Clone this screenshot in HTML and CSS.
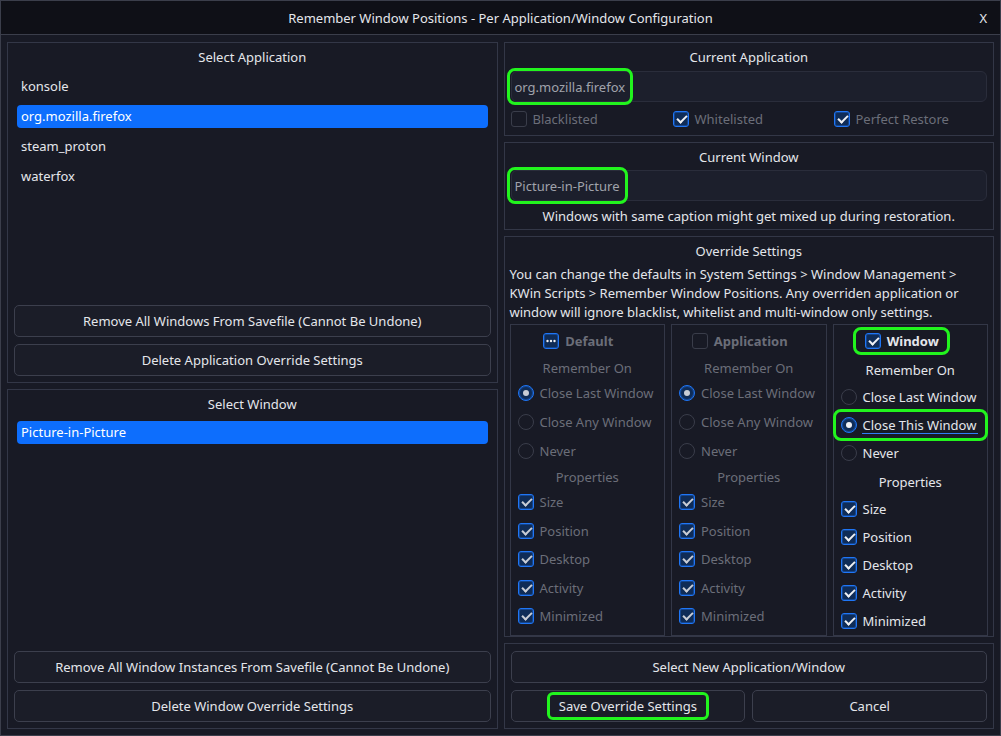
FILE: index.html
```html
<!DOCTYPE html>
<html lang="en">
<head>
<meta charset="utf-8">
<title>Remember Window Positions</title>
<link rel="stylesheet" href="styles.css">
</head>
<body>
<div class="window">
  <header class="titlebar">
    <span class="title">Remember Window Positions - Per Application/Window Configuration</span>
    <span class="close">X</span>
  </header>
  <main class="content">
    <section class="column">
      <div class="group grow">
        <div class="gtitle">Select Application</div>
        <ul class="list applist">
          <li>konsole</li>
          <li class="sel">org.mozilla.firefox</li>
          <li>steam_proton</li>
          <li>waterfox</li>
        </ul>
        <div class="btns">
          <button class="btn">Remove All Windows From Savefile (Cannot Be Undone)</button>
          <button class="btn">Delete Application Override Settings</button>
        </div>
      </div>
      <div class="group grow">
        <div class="gtitle">Select Window</div>
        <ul class="list">
          <li class="sel">Picture-in-Picture</li>
        </ul>
        <div class="btns">
          <button class="btn">Remove All Window Instances From Savefile (Cannot Be Undone)</button>
          <button class="btn">Delete Window Override Settings</button>
        </div>
      </div>
    </section>

    <section class="column">
      <div class="group groupa">
        <div class="gtitle">Current Application</div>
        <div class="field"><span class="hl fieldhl">org.mozilla.firefox</span></div>
        <div class="checks">
          <label class="opt dimtext"><span class="cb"></span>Blacklisted</label>
          <label class="opt dimtext"><span class="cb on"></span>Whitelisted</label>
          <label class="opt dimtext"><span class="cb on"></span>Perfect Restore</label>
        </div>
      </div>
      <div class="group groupb">
        <div class="gtitle">Current Window</div>
        <div class="field field2"><span class="hl fieldhl">Picture-in-Picture</span></div>
        <div class="caption">Windows with same caption might get mixed up during restoration.</div>
      </div>
      <div class="group tight grow">
        <div class="gtitle">Override Settings</div>
        <p class="para">You can change the defaults in System Settings &gt; Window Management &gt; KWin Scripts &gt; Remember Window Positions. Any overriden application or window will ignore blacklist, whitelist and multi-window only settings.</p>
        <div class="cols">
          <div class="ocol dim">
            <div class="head"><span class="cb on dots"><svg width="14" height="14" viewBox="0 0 14 14"><circle cx="3.5" cy="7" r="1.2"/><circle cx="7" cy="7" r="1.2"/><circle cx="10.5" cy="7" r="1.2"/></svg></span><span class="hlabel grey">Default</span></div>
            <div class="sub">Remember On</div>
            <div class="row r first"><span class="rb on"></span>Close Last Window</div>
            <div class="row r"><span class="rb"></span>Close Any Window</div>
            <div class="row r"><span class="rb"></span>Never</div>
            <div class="sub props">Properties</div>
            <div class="row c first"><span class="cb on"></span>Size</div>
            <div class="row c"><span class="cb on"></span>Position</div>
            <div class="row c"><span class="cb on"></span>Desktop</div>
            <div class="row c"><span class="cb on"></span>Activity</div>
            <div class="row c"><span class="cb on"></span>Minimized</div>
          </div>
          <div class="ocol dim">
            <div class="head"><span class="cb"></span><span class="hlabel">Application</span></div>
            <div class="sub">Remember On</div>
            <div class="row r first"><span class="rb on"></span>Close Last Window</div>
            <div class="row r"><span class="rb"></span>Close Any Window</div>
            <div class="row r"><span class="rb"></span>Never</div>
            <div class="sub props">Properties</div>
            <div class="row c first"><span class="cb on"></span>Size</div>
            <div class="row c"><span class="cb on"></span>Position</div>
            <div class="row c"><span class="cb on"></span>Desktop</div>
            <div class="row c"><span class="cb on"></span>Activity</div>
            <div class="row c"><span class="cb on"></span>Minimized</div>
          </div>
          <div class="ocol live">
            <div class="head"><span class="hl headhl"><span class="cb on"></span><span class="hlabel">Window</span></span></div>
            <div class="sub">Remember On</div>
            <div class="row r first"><span class="rb"></span>Close Last Window</div>
            <div class="row r"><span class="hl rowhl"><span class="rb on"></span><span class="focus">Close This Window</span></span></div>
            <div class="row r"><span class="rb"></span>Never</div>
            <div class="sub props">Properties</div>
            <div class="row c first"><span class="cb on"></span>Size</div>
            <div class="row c"><span class="cb on"></span>Position</div>
            <div class="row c"><span class="cb on"></span>Desktop</div>
            <div class="row c"><span class="cb on"></span>Activity</div>
            <div class="row c"><span class="cb on"></span>Minimized</div>
          </div>
        </div>
      </div>
      <div class="group">
        <div class="btns bottom">
          <button class="btn">Select New Application/Window</button>
          <div class="pair">
            <button class="btn"><span class="hl btnhl">Save Override Settings</span></button>
            <button class="btn">Cancel</button>
          </div>
        </div>
      </div>
    </section>
  </main>
</div>
</body>
</html>
```

FILE: styles.css
```css
* { box-sizing: border-box; margin: 0; padding: 0; }
html, body { width: 1001px; height: 736px; overflow: hidden; }
body {
  font-family: "Noto Sans", "DejaVu Sans", sans-serif;
  font-size: 13px;
  color: #e4e6eb;
  background: #181a25;
}
.window {
  width: 1001px;
  height: 736px;
  border: 1px solid #3b3e4b;
  display: flex;
  flex-direction: column;
  background: #181a25;
}
.titlebar {
  flex: none;
  height: 34px;
  background: #0f1017;
  border-bottom: 1px solid #3b3e4b;
  display: grid;
  grid-template-columns: 1fr auto 1fr;
  align-items: center;
}
.title { grid-column: 2; }
.close { grid-column: 3; justify-self: end; padding-right: 13px; }

.content {
  flex: 1;
  min-height: 0;
  display: grid;
  grid-template-columns: 1fr 1fr;
  gap: 6px;
  padding: 7px 6px 6px;
}
.column { display: flex; flex-direction: column; gap: 6px; min-height: 0; }
.group {
  border: 1px solid #333747;
  display: flex;
  flex-direction: column;
  padding: 0 6px 6px;
}
.grow { flex: 1; min-height: 0; }
.tight { padding: 0 5px 5px; }
.gtitle { text-align: center; padding-top: 5px; line-height: 18px; }

.list { list-style: none; margin: 8px 3px 0; display: flex; flex-direction: column; gap: 7px; }
.applist { margin-top: 9px; }
.list li { height: 23px; line-height: 23px; padding-left: 4px; border-radius: 4px; }
.list li.sel { background: #0d6efd; color: #fff; }

.btns { margin-top: auto; display: flex; flex-direction: column; gap: 7px; }
.btns.bottom { margin-top: 7px; }
.btn {
  height: 32px;
  border: 1px solid #3c3f4d;
  border-radius: 5px;
  background: #1b1d28;
  color: #e4e6eb;
  font: inherit;
  display: flex;
  align-items: center;
  justify-content: center;
}
.pair { display: grid; grid-template-columns: 1fr 1fr; gap: 7px; }

.hl { border: 3px solid #22f41e; border-radius: 8px; display: inline-flex; align-items: center; }
.field {
  height: 31px;
  margin-top: 5px;
  border: 1px solid #2a2d3b;
  border-radius: 6px;
  background: #1c1f2c;
  display: flex;
  align-items: center;
  color: #a0a3ab;
}
.fieldhl { height: 37px; margin-left: -5px; padding: 0 5px 0 5px; flex: none; }
.field2 { margin-top: 4px; }

.groupa { padding-bottom: 7px; }
.checks {
  display: grid;
  grid-template-columns: 162px 161px 1fr;
  margin-top: 8px;
  height: 18px;
  align-items: center;
}
.opt { display: flex; align-items: center; gap: 6px; }
.dimtext { color: #6b6e79; }
.groupb { padding-bottom: 4px; }
.caption { text-align: center; margin-top: 6px; line-height: 18px; }

.para { margin-top: 5px; line-height: 19px; }
.cols { display: grid; grid-template-columns: repeat(3, 1fr); gap: 6px; height: 310px; margin-top: 2px; }
.ocol { border: 1px solid #333747; padding: 6px 7px 0; display: flex; flex-direction: column; }
.head { height: 20px; display: flex; align-items: center; justify-content: center; gap: 6px; padding-right: 18px; font-weight: 700; }
.hlabel.grey { color: #6b6e79; }
.headhl { height: 28px; padding: 0 8px 0 9px; gap: 6px; flex: none; }
.sub { text-align: center; height: 18px; line-height: 18px; }
.row { display: flex; align-items: center; gap: 6px; }

.dim { color: #6b6e79; }
.dim .sub { margin-top: 8px; }
.dim .props { margin-top: 3px; }
.dim .r { height: 29px; }
.dim .c { height: 28.5px; }
.dim .r.first { margin-top: 1px; }
.dim .c.first { margin-top: 2px; }

.live .sub { margin-top: 10px; }
.live .r { height: 28px; }
.live .c { height: 28px; }
.live .first { margin-top: 4px; }
.live .props { margin-top: 6px; }
.rowhl { height: 32px; margin: 0 -8px; flex: 1; padding-left: 5px; gap: 6px; }
.focus { line-height: 16px; border-bottom: 1px solid #2f7cf6; padding: 0 2px 0 1px; margin-left: -1px; }

.cb, .rb {
  width: 16px;
  height: 16px;
  flex: none;
  border: 1px solid #3a3d4a;
  position: relative;
}
.cb { border-radius: 3px; }
.rb { border-radius: 50%; }
.cb.on, .rb.on {
  border-color: #1f76f6;
  background: #0f2c57;
  box-shadow: inset 0 0 0 1px rgba(31, 118, 246, 0.35);
}
.cb.on::after {
  content: "";
  position: absolute;
  left: 3px;
  top: 3px;
  width: 8px;
  height: 4px;
  border-left: 2px solid #eef0f4;
  border-bottom: 2px solid #eef0f4;
  transform: rotate(-45deg);
}
.cb.dots::after { display: none; }
.cb.dots svg { display: block; margin: 0; fill: #eef0f4; }
.rb.on::after {
  content: "";
  position: absolute;
  left: 4px;
  top: 4px;
  width: 6px;
  height: 6px;
  border-radius: 50%;
  background: #eef0f4;
}
.dim .cb.on::after { border-color: #c9cdd5; }
.dim .rb.on::after { background: #c9cdd5; }
.btnhl { height: 28px; padding: 0 9px; border-radius: 6px; }
```
